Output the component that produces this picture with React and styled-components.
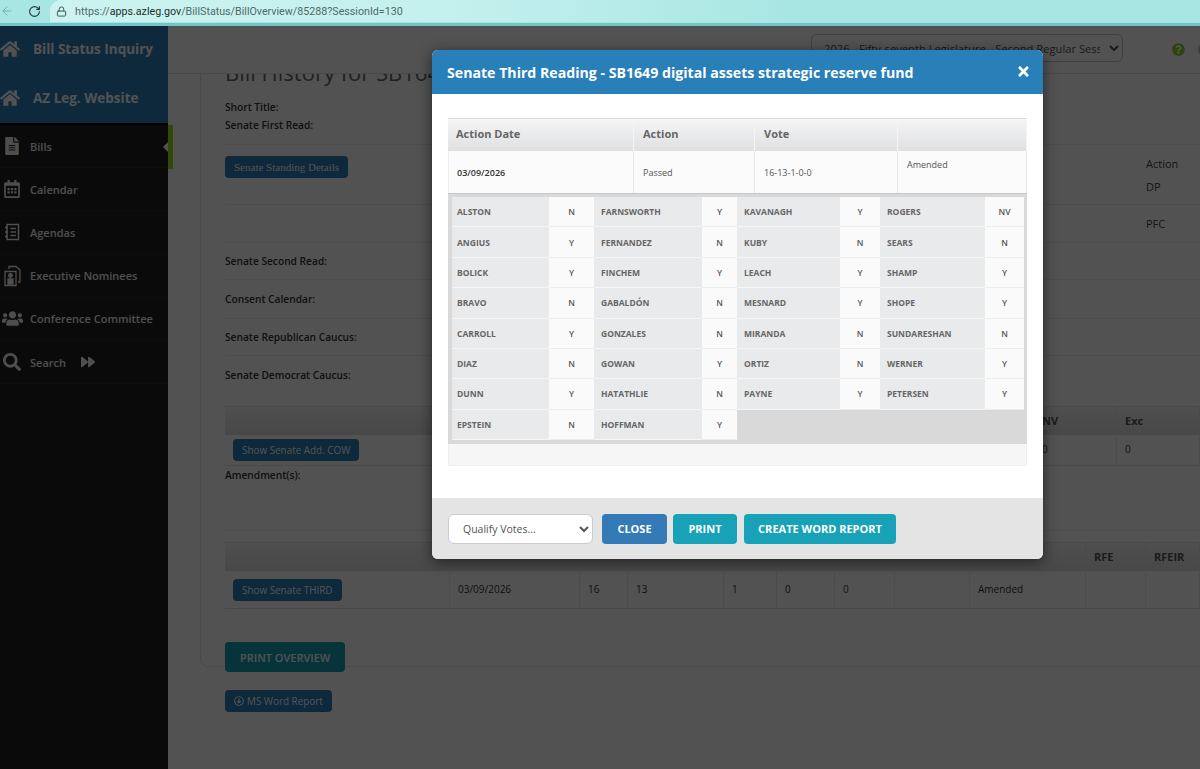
import styled, { createGlobalStyle } from 'styled-components';
import { FaHome, FaFileAlt, FaRegCalendarAlt, FaUsers, FaSearch, FaForward, FaTimes, FaQuestionCircle, FaRegArrowAltCircleDown, FaCircle } from 'react-icons/fa';
import { ArrowLeft, RotateCw, Lock } from 'lucide-react';

const GlobalStyle = createGlobalStyle`
  html, body { margin: 0; padding: 0; height: 100%; overflow: hidden; }
  body { font-family: "Open Sans", "Liberation Sans", sans-serif; background: #fff; }
  * { box-sizing: border-box; }
`;

const Screen = styled.div`
  width: 1200px;
  height: 769px;
  display: flex;
  flex-direction: column;
  overflow: hidden;
`;

const BrowserBar = styled.div`
  height: 26px;
  flex: none;
  display: flex;
  align-items: flex-start;
  background: #a8e6e3;
  border-bottom: 3px solid #6fc6c6;
`;

const NavButton = styled.div`
  width: ${p => p.$w}px;
  height: 22px;
  flex: none;
  display: flex;
  align-items: center;
  justify-content: ${p => p.$align || 'center'};
  color: ${p => p.$color};
`;

const UrlPill = styled.div`
  flex: 1;
  height: 22px;
  margin-left: 3px;
  padding-left: 6px;
  display: flex;
  align-items: center;
  gap: 8px;
  border-radius: 11px 0 0 0;
  background: linear-gradient(90deg, #ccf3f0 0, #c4f0ed 35%, #a8e6e3 65%);
  font-family: "Roboto", sans-serif;
  font-size: 10.7px;
  color: #4d6a6a;
  b { font-weight: 400; color: #17302f; }
`;

const Page = styled.div`
  position: relative;
  flex: 1;
  display: flex;
  min-height: 0;
`;

const Sidebar = styled.nav`
  position: relative;
  width: 168px;
  flex: none;
  background: #212121;
`;

const SideHead = styled.div`
  height: ${p => p.$h}px;
  padding-bottom: 2px;
  display: flex;
  align-items: center;
  background: #2980b9;
  color: #fff;
  font-size: 13.5px;
  font-weight: 700;
  svg { width: 20px; height: 20px; margin: 0 13px 0 0; flex: none; }
`;

const SideHeadGroup = styled.div`
  border-bottom: 2px solid #000;
`;

const SideItem = styled.div`
  height: 43.2px;
  display: flex;
  align-items: center;
  color: #f2f2f2;
  font-size: 11px;
  font-weight: 600;
  border-bottom: 1px solid #2b2b2b;
  span { margin-left: 29px; }
  svg { flex: none; }
`;

const IconSlot = styled.div`
  width: 22px;
  margin-left: 1px;
  margin-right: -22px;
  display: flex;
  justify-content: center;
  font-size: 17px;
`;

const ActiveTab = styled.div`
  position: absolute;
  top: 99px;
  left: 168px;
  width: 5px;
  height: 44px;
  background: #a0e020;
  &::before {
    content: '';
    position: absolute;
    left: -5px;
    top: 17px;
    border-style: solid;
    border-width: 5px 5px 5px 0;
    border-color: transparent #fff transparent transparent;
  }
`;

const Main = styled.main`
  flex: 1;
  min-width: 0;
  display: flex;
  flex-direction: column;
  overflow: hidden;
  background: #fff;
`;

const TopBar = styled.div`
  position: relative;
  z-index: 1;
  height: 48px;
  flex: none;
  display: flex;
  align-items: center;
  padding: 0 0 0 643px;
  background: #fff;
  border-bottom: 1px solid #e3e3e3;
`;

const SessionSelect = styled.select`
  width: 312px;
  height: 28px;
  margin-top: -3px;
  padding: 0 6px 0 8px;
  border: 1px solid #c8c8c8;
  border-radius: 6px;
  background: #fff;
  color: #555;
  font-family: inherit;
  font-size: 11.2px;
`;

const Help = styled.div`
  margin-left: 49px;
  color: #82d628;
  font-size: 13px;
  display: flex;
`;

const UserDot = styled.div`
  margin-left: 13px;
  color: #bbb;
  font-size: 13px;
  display: flex;
`;

const Panel = styled.div`
  width: 1060px;
  height: 593px;
  margin-left: 32px;
  flex: none;
  padding: 0 0 0 24px;
  border: 1px solid #e6e6e6;
  border-top: 0;
  border-radius: 0 0 8px 8px;
`;

const Heading = styled.h2`
  height: 27px;
  margin: -17px 0 0;
  font-size: 22px;
  font-weight: 400;
  color: #666;
  white-space: nowrap;
`;

const Summary = styled.div`
  height: 61px;
  padding-top: 14px;
  font-size: 10.2px;
  line-height: 18px;
  font-weight: 600;
  color: #333;
  border-bottom: 1px solid #eee;
  width: 975px;
`;

const Line = styled.div`
  height: ${p => p.$h}px;
  display: flex;
  align-items: ${p => p.$align || 'center'};
  justify-content: space-between;
  padding-top: ${p => p.$pt || 0}px;
  width: 975px;
  font-size: 10.2px;
  font-weight: 600;
  color: #333;
  border-bottom: ${p => (p.$plain ? 'none' : '1px solid #eee')};
`;

const SideText = styled.div`
  width: 54px;
  margin-top: ${p => p.$mt || 0}px;
  line-height: 23px;
  font-weight: 400;
  font-size: 11px;
  color: #444;
`;

const Btn = styled.button`
  height: ${p => p.$h || 22}px;
  padding: 0 ${p => p.$px || 9}px;
  border: 0;
  border-radius: 4px;
  background: ${p => p.$bg || '#2980b9'};
  color: #fff;
  font-family: ${p => (p.$serif ? '"Liberation Serif", serif' : 'inherit')};
  font-size: ${p => p.$size || 9.9}px;
  font-weight: ${p => p.$weight || 400};
  display: inline-flex;
  align-items: center;
  gap: 3px;
  white-space: nowrap;
`;

const Table = styled.div`
  width: 975px;
  margin-top: ${p => p.$mt}px;
  display: grid;
  grid-template-columns: ${p => p.$cols};
  border-bottom: 1px solid #e6e6e6;
`;

const HeadCell = styled.div`
  height: 29px;
  padding: 0 8px 2px;
  display: flex;
  align-items: center;
  background: linear-gradient(#f4f4f4, #dfdfdf);
  border-right: 1px solid #e6e6e6;
  border-top: 1px solid #e6e6e6;
  font-size: 11px;
  font-weight: 700;
  color: #555;
`;

const BodyCell = styled.div`
  height: ${p => p.$h}px;
  padding: 0 8px 2px;
  display: flex;
  align-items: center;
  border-right: 1px solid #ececec;
  font-size: 10px;
  font-weight: 500;
  color: #333;
  button { margin-top: 2px; }
`;

const PrintRow = styled.div`
  margin-top: 33px;
  margin-bottom: -6px;
`;

const WordRow = styled.div`
  margin: 22px 0 0 57px;
`;

const Overlay = styled.div`
  position: absolute;
  inset: 0;
  z-index: 2;
  background: rgba(0, 0, 0, 0.68);
`;

const Modal = styled.div`
  position: absolute;
  z-index: 3;
  top: 24px;
  left: 432px;
  width: 611px;
  height: 509px;
  display: flex;
  flex-direction: column;
  overflow: hidden;
  border-radius: 6px;
  background: #fff;
  box-shadow: 0 3px 14px rgba(0, 0, 0, 0.55);
`;

const ModalHead = styled.div`
  height: 44px;
  flex: none;
  padding: 0 12px 0 15px;
  display: flex;
  align-items: center;
  justify-content: space-between;
  background: #2980b9;
  color: #fff;
  font-size: 14.15px;
  font-weight: 700;
  svg { font-size: 15px; margin-bottom: 2px; }
`;

const ModalBody = styled.div`
  flex: 1;
  padding: 24px 16px 0;
`;

const VoteSummary = styled.div`
  display: grid;
  grid-template-columns: 186px 121px 143px 129px;
`;

const VoteHead = styled.div`
  height: 33px;
  padding: 0 ${p => (p.$first ? 8 : 9)}px 3px;
  display: flex;
  align-items: center;
  background: linear-gradient(#f5f5f6, #dfe0e2);
  border-top: 1px solid #dcdcdc;
  border-right: 1px solid #f4f4f4;
  font-size: 11px;
  font-weight: 700;
  color: #666;
`;

const VoteCell = styled.div`
  height: 42px;
  padding: ${p => (p.$top ? '7px 9px 0' : p.$first ? '0 8px' : '0 9px')};
  display: flex;
  align-items: ${p => (p.$top ? 'flex-start' : 'center')};
  background: #fbfbfb;
  border-right: 1px solid #e6e6e6;
  border-left: ${p => (p.$first ? '1px solid #eee' : 'none')};
  font-size: 9px;
  color: ${p => (p.$dark ? '#333' : '#555')};
  font-weight: ${p => (p.$dark ? 600 : 400)};
`;

const RollCall = styled.div`
  height: 251px;
  padding: 3px 3px 4px 4px;
  background: #d9d9d9;
  border-top: 1px solid #c8c8c8;
  display: grid;
  grid-template-columns: 97px 45px 108px 35px 103px 40px 105px 39px;
  grid-template-rows: repeat(8, 1fr);
`;

const NameCell = styled.div`
  padding-left: ${p => (p.$first ? 5 : 7)}px;
  display: flex;
  align-items: center;
  background: #e9eaeb;
  border-bottom: 1px solid #f5f5f5;
  font-size: 8.5px;
  font-weight: 700;
  color: #666;
`;

const VoteValue = styled.div`
  display: flex;
  align-items: center;
  justify-content: center;
  background: #fafafa;
  border-bottom: 1px solid #eee;
  font-size: 8.5px;
  font-weight: 600;
  color: #555;
`;

const EmptyStrip = styled.div`
  height: 22px;
  background: #f6f6f6;
  border: 1px solid #efefef;
  border-top: 0;
`;

const ModalFoot = styled.div`
  height: 61px;
  flex: none;
  padding: 16px 16px 0;
  display: flex;
  align-items: flex-start;
  background: #e4e4e4;
`;

const QualifySelect = styled.select`
  width: 145px;
  height: 30px;
  margin-right: 9px;
  padding: 0 10px;
  border: 1px solid #ccc;
  border-radius: 6px;
  background: #fff;
  color: #555;
  font-family: inherit;
  font-size: 10.5px;
`;

const FootBtn = styled.button`
  height: 30px;
  width: ${p => p.$w}px;
  margin-right: ${p => p.$mr}px;
  padding: 0 0 2px;
  border: 0;
  border-radius: 4px;
  background: ${p => p.$bg};
  color: #fff;
  font-family: inherit;
  font-size: 11px;
  font-weight: 700;
`;

const votes = [
  ['ALSTON', 'N', 'FARNSWORTH', 'Y', 'KAVANAGH', 'Y', 'ROGERS', 'NV'],
  ['ANGIUS', 'Y', 'FERNANDEZ', 'N', 'KUBY', 'N', 'SEARS', 'N'],
  ['BOLICK', 'Y', 'FINCHEM', 'Y', 'LEACH', 'Y', 'SHAMP', 'Y'],
  ['BRAVO', 'N', 'GABALDÓN', 'N', 'MESNARD', 'Y', 'SHOPE', 'Y'],
  ['CARROLL', 'Y', 'GONZALES', 'N', 'MIRANDA', 'N', 'SUNDARESHAN', 'N'],
  ['DIAZ', 'N', 'GOWAN', 'Y', 'ORTIZ', 'N', 'WERNER', 'Y'],
  ['DUNN', 'Y', 'HATATHLIE', 'N', 'PAYNE', 'Y', 'PETERSEN', 'Y'],
  ['EPSTEIN', 'N', 'HOFFMAN', 'Y'],
];

const AgendaIcon = () => (
  <svg width="17" height="18" viewBox="0 0 17 18" fill="none" stroke="currentColor" strokeWidth="1.5">
    <path d="M3 1.5h11.5v15H3z" />
    <path d="M1 4.5h3M1 9h3M1 13.5h3M6.5 5.5h5.5M6.5 9h5.5M6.5 12.5h5.5" />
  </svg>
);

const NomineeIcon = () => (
  <svg width="17" height="22" viewBox="0 0 17 22" fill="none" stroke="currentColor" strokeWidth="1.3">
    <path d="M5 4V1.5h7L16 5v12h-2" />
    <path d="M1 6.5h11v14H1z" />
    <circle cx="6.5" cy="10.5" r="1.8" fill="currentColor" />
    <path d="M4 14h5v5H4z" fill="currentColor" />
  </svg>
);

const sideItems = [
  { label: 'Bills', icon: <FaFileAlt size={18} /> },
  { label: 'Calendar', icon: <FaRegCalendarAlt size={18} /> },
  { label: 'Agendas', icon: <AgendaIcon /> },
  { label: 'Executive Nominees', icon: <NomineeIcon /> },
  { label: 'Conference Committee', icon: <FaUsers size={21} /> },
];

const App = () => (
  <Screen>
    <GlobalStyle />
    <BrowserBar>
      <NavButton $w={22} $align="flex-start" $color="#6fa9a8"><ArrowLeft size={14} strokeWidth={1.5} /></NavButton>
      <NavButton $w={25} $color="#1d3a3a"><RotateCw size={13} strokeWidth={2} /></NavButton>
      <UrlPill>
        <Lock size={11} color="#33504f" strokeWidth={2} />
        <span>https://<b>apps.azleg.gov</b>/BillStatus/BillOverview/85288?SessionId=130</span>
      </UrlPill>
    </BrowserBar>
    <Page>
      <Sidebar>
        <SideHeadGroup>
          <SideHead $h={48}><FaHome /><span>Bill Status Inquiry</span></SideHead>
          <SideHead $h={49}><FaHome /><span>AZ Leg. Website</span></SideHead>
        </SideHeadGroup>
        {sideItems.map(item => (
          <SideItem key={item.label}>
            <IconSlot>{item.icon}</IconSlot>
            <span>{item.label}</span>
          </SideItem>
        ))}
        <SideItem>
          <IconSlot><FaSearch size={18} /></IconSlot>
          <span>Search</span>
          <FaForward size={14} style={{ marginLeft: 15 }} />
        </SideItem>
        <ActiveTab />
      </Sidebar>
      <Main>
        <TopBar>
          <SessionSelect>
            <option>2026 - Fifty-seventh Legislature - Second Regular Session</option>
          </SessionSelect>
          <Help><FaQuestionCircle /></Help>
          <UserDot><FaCircle /></UserDot>
        </TopBar>
        <Panel>
          <Heading>Bill History for SB1649</Heading>
          <Summary>
            <div>Short Title:</div>
            <div>Senate First Read:</div>
          </Summary>
          <Line $h={60} $align="flex-start" $pt={11}>
            <Btn $serif $size={11}>Senate Standing Details</Btn>
            <SideText $mt={-4}>Action<br />DP</SideText>
          </Line>
          <Line $h={38}><span /><SideText $mt={-1}>PFC</SideText></Line>
          <Line $h={37}>Senate Second Read:</Line>
          <Line $h={39}>Consent Calendar:</Line>
          <Line $h={37}>Senate Republican Caucus:</Line>
          <Line $h={38} $plain>Senate Democrat Caucus:</Line>
          <Table $mt={12} $cols="225px 584px 83px 83px">
            <HeadCell />
            <HeadCell />
            <HeadCell>NV</HeadCell>
            <HeadCell>Exc</HeadCell>
            <BodyCell $h={30}><Btn>Show Senate Add. COW</Btn></BodyCell>
            <BodyCell $h={30} />
            <BodyCell $h={30}>0</BodyCell>
            <BodyCell $h={30}>0</BodyCell>
          </Table>
          <Line $h={65} $align="flex-start"><span style={{ lineHeight: '18px' }}>Amendment(s):</span></Line>
          <Table $mt={11} $cols="225px 130px 48px 96px 53px 58px 60px 75px 116px 60px 54px">
            <HeadCell /><HeadCell /><HeadCell /><HeadCell /><HeadCell /><HeadCell />
            <HeadCell /><HeadCell /><HeadCell /><HeadCell>RFE</HeadCell><HeadCell>RFEIR</HeadCell>
            <BodyCell $h={37}><Btn>Show Senate THIRD</Btn></BodyCell>
            <BodyCell $h={37}>03/09/2026</BodyCell>
            <BodyCell $h={37}>16</BodyCell>
            <BodyCell $h={37}>13</BodyCell>
            <BodyCell $h={37}>1</BodyCell>
            <BodyCell $h={37}>0</BodyCell>
            <BodyCell $h={37}>0</BodyCell>
            <BodyCell $h={37} />
            <BodyCell $h={37}>Amended</BodyCell>
            <BodyCell $h={37} />
            <BodyCell $h={37} />
          </Table>
          <PrintRow>
            <Btn $bg="#17a2b8" $h={30} $px={15} $size={11} $weight={600}>PRINT OVERVIEW</Btn>
          </PrintRow>
        </Panel>
        <WordRow>
          <Btn><FaRegArrowAltCircleDown size={10} /> MS Word Report</Btn>
        </WordRow>
      </Main>
      <Overlay />
      <Modal>
        <ModalHead>
          <span>Senate Third Reading - SB1649 digital assets strategic reserve fund</span>
          <FaTimes />
        </ModalHead>
        <ModalBody>
          <VoteSummary>
            <VoteHead $first>Action Date</VoteHead>
            <VoteHead>Action</VoteHead>
            <VoteHead>Vote</VoteHead>
            <VoteHead />
            <VoteCell $first $dark>03/09/2026</VoteCell>
            <VoteCell>Passed</VoteCell>
            <VoteCell>16-13-1-0-0</VoteCell>
            <VoteCell $top>Amended</VoteCell>
          </VoteSummary>
          <RollCall>
            {votes.flat().map((text, i) =>
              i % 2 === 0
                ? <NameCell key={i} $first={i % 8 === 0}>{text}</NameCell>
                : <VoteValue key={i}>{text}</VoteValue>
            )}
          </RollCall>
          <EmptyStrip />
        </ModalBody>
        <ModalFoot>
          <QualifySelect>
            <option>Qualify Votes...</option>
          </QualifySelect>
          <FootBtn $w={65} $mr={6} $bg="#337ab7">CLOSE</FootBtn>
          <FootBtn $w={64} $mr={7} $bg="#17a2b8">PRINT</FootBtn>
          <FootBtn $w={152} $mr={0} $bg="#17a2b8">CREATE WORD REPORT</FootBtn>
        </ModalFoot>
      </Modal>
    </Page>
  </Screen>
);

export default App;
